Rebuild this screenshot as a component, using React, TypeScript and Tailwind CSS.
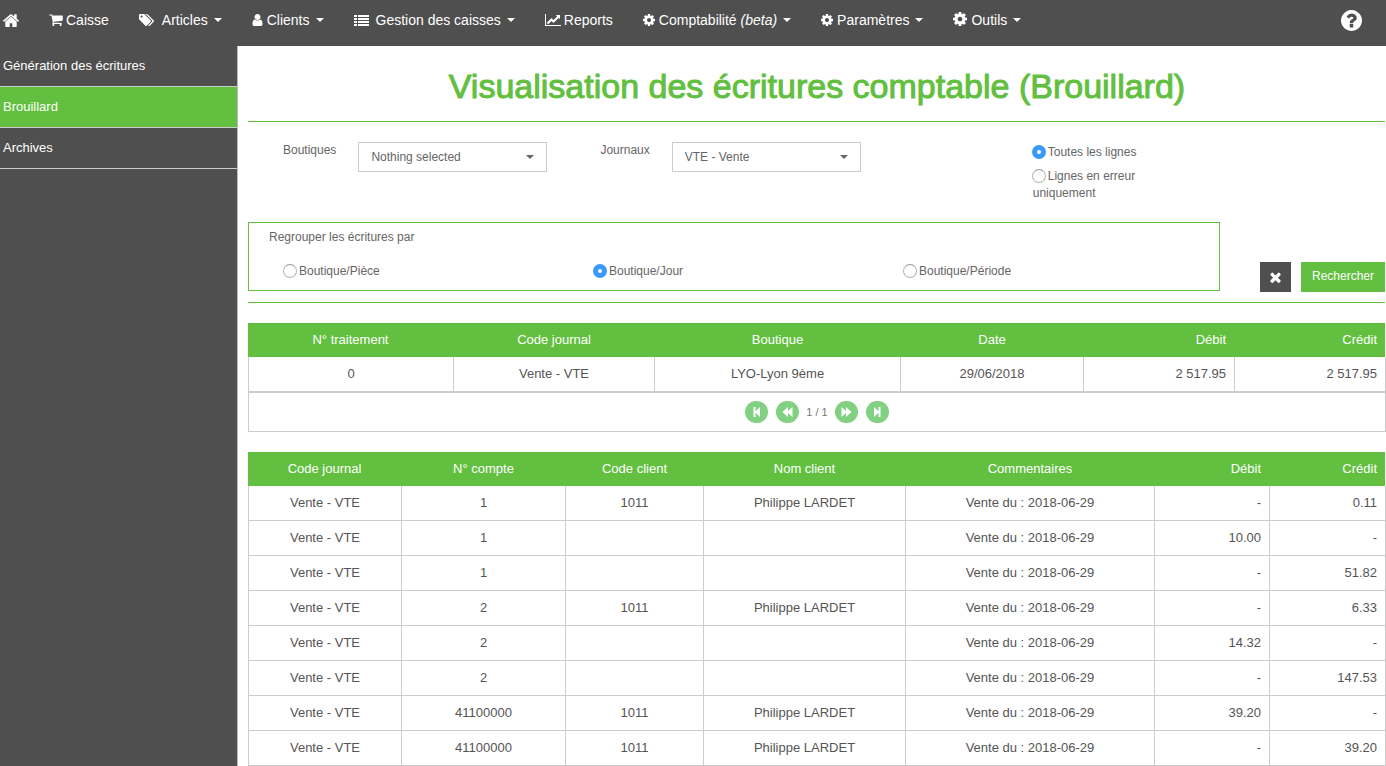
import React from "react";

const FA = {
  home: "M1472 992v480q0 26-19 45t-45 19h-384v-384h-256v384h-384q-26 0-45-19t-19-45v-480q0-1 .5-3t.5-3l575-474 575 474q1 2 1 6zm223-69l-62 74q-8 9-21 11h-3q-13 0-21-7l-692-577-692 577q-12 8-24 7-13-2-21-11l-62-74q-8-10-7-23.5t11-21.5l719-599q32-26 76-26t76 26l244 204v-195q0-14 9-23t23-9h192q14 0 23 9t9 23v408l219 182q10 8 11 21.5t-7 23.5z",
  cart: "M704 1536q0 52-38 90t-90 38-90-38-38-90 38-90 90-38 90 38 38 90zm896 0q0 52-38 90t-90 38-90-38-38-90 38-90 90-38 90 38 38 90zm128-1088v512q0 24-16.5 42.5t-40.5 21.5l-1044 122q13 60 13 70 0 16-24 64h920q26 0 45 19t19 45-19 45-45 19h-1024q-26 0-45-19t-19-45q0-11 8-31.5t16-36 21.5-40 15.5-29.5l-177-823h-204q-26 0-45-19t-19-45 19-45 45-19h256q16 0 28.5 6.5t19.5 15.5 13 24.5 8 26 5.5 29.5 4.5 26h1201q26 0 45 19t19 45z",
  tags: "M448 448q0-53-37.5-90.5t-90.5-37.5-90.5 37.5-37.5 90.5 37.5 90.5 90.5 37.5 90.5-37.5 37.5-90.5zm1067 576q0 53-37 90l-491 492q-39 37-91 37-53 0-90-37l-715-716q-38-37-64.5-101t-26.5-117v-416q0-52 38-90t90-38h416q53 0 117 26.5t102 64.5l715 714q37 39 37 91zm384 0q0 53-37 90l-491 492q-39 37-91 37-36 0-59-14t-53-45l470-470q37-37 37-90 0-52-37-91l-715-714q-38-38-102-64.5t-117-26.5h224q53 0 117 26.5t102 64.5l715 714q37 39 37 91z",
  user: "M1536 1399q0 109-62.5 187t-150.5 78h-854q-88 0-150.5-78t-62.5-187q0-85 8.5-160.5t31.5-152 58.5-131 94-89 134.5-34.5q131 128 313 128t313-128q76 0 134.5 34.5t94 89 58.5 131 31.5 152 8.5 160.5zm-256-887q0 159-112.5 271.5t-271.5 112.5-271.5-112.5-112.5-271.5 112.5-271.5 271.5-112.5 271.5 112.5 112.5 271.5z",
  list: "M0 0h3v2h-3zM0 3h3v2h-3zM0 6h3v2h-3zM0 9h3v2h-3zM4 0h11v2h-11zM4 3h11v2h-11zM4 6h11v2h-11zM4 9h11v2h-11z",
  chart: "M2048 1536v128h-2048v-1536h128v1408h1920zm-128-1248v435q0 21-19.5 29.5t-35.5-7.5l-121-121-633 633q-10 10-23 10t-23-10l-233-233-416 416-192-192 585-585q10-10 23-10t23 10l233 233 464-464-121-121q-16-16-7.5-35.5t29.5-19.5h435q14 0 23 9t9 23z",
  cog: "M1152 896q0-106-75-181t-181-75-181 75-75 181 75 181 181 75 181-75 75-181zm512-109v222q0 12-8 23t-20 13l-185 28q-19 54-39 91 35 50 107 138 10 12 10 25t-9 23q-27 37-99 108t-94 71q-12 0-26-9l-138-108q-44 23-91 38-16 136-29 186-7 28-36 28h-222q-14 0-24.5-8.5t-11.5-21.5l-28-184q-49-16-90-37l-141 107q-10 9-25 9-14 0-25-11-126-114-165-168-7-10-7-23 0-12 8-23 15-21 51-66.5t54-70.5q-27-50-41-99l-183-27q-13-2-21-12.5t-8-23.5v-222q0-12 8-23t19-13l186-28q14-46 39-92-40-57-107-138-10-12-10-24 0-10 9-23 26-36 98.5-107.5t94.5-71.5q13 0 26 10l138 107q44-23 91-38 16-136 29-186 7-28 36-28h222q14 0 24.5 8.5t11.5 21.5l28 184q49 16 90 37l142-107q9-9 24-9 13 0 25 10 129 119 165 170 7 8 7 22 0 12-8 23-15 21-51 66.5t-54 70.5q26 50 41 98l183 28q13 2 21 12.5t8 23.5z",
  help: "M1024 1376v-192q0-14-9-23t-23-9h-192q-14 0-23 9t-9 23v192q0 14 9 23t23 9h192q14 0 23-9t9-23zm256-672q0-88-55.5-163t-138.5-116-170-41q-243 0-371 213-15 24 8 42l132 100q7 6 19 6 16 0 25-12 53-68 86-92 34-24 86-24 48 0 85.5 26t37.5 59q0 38-20 61t-68 45q-63 28-115.5 86.5t-52.5 125.5v36q0 14 9 23t23 9h192q14 0 23-9t9-23q0-19 21.5-49.5t54.5-49.5q32-18 49-28.5t46-35 44.5-48 28-60.5 12.5-81zm384 192q0 209-103 385.5t-279.5 279.5-385.5 103-385.5-103-279.5-279.5-103-385.5 103-385.5 279.5-279.5 385.5-103 385.5 103 279.5 279.5 103 385.5z",
  times:
    "M1490 1322q0 40-28 68l-136 136q-28 28-68 28t-68-28l-294-294-294 294q-28 28-68 28t-68-28l-136-136q-28-28-28-68t28-68l294-294-294-294q-28-28-28-68t28-68l136-136q28-28 68-28t68 28l294 294 294-294q28-28 68-28t68 28l136 136q28 28 28 68t-28 68l-294 294 294 294q28 28 28 68z",
};

function Icon({ d, box, className }: { d: string; box: string; className: string }) {
  return (
    <svg viewBox={box} className={`shrink-0 fill-current ${className}`} aria-hidden="true">
      <path d={d} />
    </svg>
  );
}

function Caret({ className = "" }: { className?: string }) {
  return (
    <span
      className={`h-0 w-0 border-x-4 border-t-4 border-x-transparent ${className}`}
      aria-hidden="true"
    />
  );
}

type NavItem = {
  label: React.ReactNode;
  d: string;
  box: string;
  icon: string;
  gap: string;
  menu?: boolean;
};

const NAV: NavItem[] = [
  { label: "Caisse", d: FA.cart, box: "64 192 1664 1472", icon: "h-3 w-[14px]", gap: "gap-[3px]" },
  { label: "Articles", d: FA.tags, box: "0 128 1899 1515", icon: "h-3 w-[15px]", gap: "gap-2", menu: true },
  { label: "Clients", d: FA.user, box: "256 128 1280 1536", icon: "h-3 w-[11px]", gap: "gap-1", menu: true },
  { label: "Gestion des caisses", d: FA.list, box: "0 0 15 11", icon: "h-[11px] w-[15px]", gap: "gap-[7px]", menu: true },
  { label: "Reports", d: FA.chart, box: "0 128 2048 1536", icon: "h-3 w-4", gap: "gap-[3px]" },
  {
    label: (
      <>
        Comptabilité <i>(beta)</i>
      </>
    ),
    d: FA.cog,
    box: "128 128 1536 1536",
    icon: "h-3 w-3",
    gap: "gap-1",
    menu: true,
  },
  { label: "Paramètres", d: FA.cog, box: "128 128 1536 1536", icon: "h-3 w-3", gap: "gap-1", menu: true },
  { label: "Outils", d: FA.cog, box: "128 128 1536 1536", icon: "mb-[2px] h-[14px] w-[14px]", gap: "gap-1", menu: true },
];

function TopBar() {
  return (
    <header className="flex h-[46px] items-start justify-between bg-[#4f4f4f] pt-[10px] text-white">
      <nav className="flex gap-[30px] pl-[3px] text-sm leading-5">
        <a href="#accueil" aria-label="Accueil" className="flex h-5 items-center">
          <Icon d={FA.home} box="89 223 1614 1313" className="h-[13px] w-4" />
        </a>
        {NAV.map((item, i) => (
          <a key={i} href="#menu" className={`flex items-center whitespace-nowrap ${item.gap}`}>
            <Icon d={item.d} box={item.box} className={item.icon} />
            <span className="flex items-center gap-[6px]">
              <span>{item.label}</span>
              {item.menu && <Caret />}
            </span>
          </a>
        ))}
      </nav>
      <a href="#aide" aria-label="Aide" className="mr-6">
        <Icon d={FA.help} box="128 128 1536 1536" className="h-[21px] w-[21px]" />
      </a>
    </header>
  );
}

function SideBar() {
  const items = ["Génération des écritures", "Brouillard", "Archives"];
  return (
    <aside className="w-[238px] shrink-0 border-r border-[#bbbbbb] bg-[#4f4f4f]">
      <ul>
        {items.map((t) => (
          <li key={t} className="border-b border-[#cccccc]">
            <a
              href="#section"
              className={`flex h-10 items-center pl-[3px] text-[13px] text-white ${
                t === "Brouillard" ? "bg-[#62bf3f]" : ""
              }`}
            >
              {t}
            </a>
          </li>
        ))}
      </ul>
    </aside>
  );
}

function SelectField({ id, label, options }: { id: string; label: string; options: string[] }) {
  return (
    <div className="flex items-start gap-[22px]">
      <label htmlFor={id} className="leading-4">
        {label}
      </label>
      <div className="relative">
        <select
          id={id}
          className="h-[30px] w-[189px] appearance-none border border-[#cccccc] bg-white pr-8 pl-3 text-xs text-[#666666]"
        >
          {options.map((o) => (
            <option key={o}>{o}</option>
          ))}
        </select>
        <Caret className="pointer-events-none absolute top-[13px] right-[13px]" />
      </div>
    </div>
  );
}

function Radio({ name, label, checked }: { name: string; label: string; checked?: boolean }) {
  return (
    <label className="block leading-[17px]">
      <input
        type="radio"
        name={name}
        defaultChecked={checked}
        className="mr-[2px] -ml-px inline-block h-[14px] w-[14px] appearance-none rounded-full border border-[#b4b4b4] border-t-[#999999] bg-white align-[-3px] checked:border-[5px] checked:border-[#3b99fc]"
      />
      {label}
    </label>
  );
}

type Col = { title: string; width: string; right?: boolean };

function DataTable({ cols, rows }: { cols: Col[]; rows: string[][] }) {
  return (
    <table className="w-full table-fixed border-separate border-spacing-0 text-[13px]">
      <colgroup>
        {cols.map((c, i) => (
          <col key={i} className={c.width} />
        ))}
      </colgroup>
      <thead>
        <tr className="h-[34px] text-white">
          {cols.map((c, i) => (
            <th
              key={i}
              className={`border-r border-[#62bf3f] bg-[#62bf3f] px-2 font-normal last:border-white ${
                c.right ? "text-right" : "text-center"
              }`}
            >
              {c.title}
            </th>
          ))}
        </tr>
      </thead>
      <tbody>
        {rows.map((r, i) => (
          <tr key={i} className="h-[35px]">
            {r.map((v, j) => (
              <td
                key={j}
                className={`border-r border-b border-[#cccccc] px-2 first:border-l ${
                  cols[j].right ? "text-right" : "text-center"
                }`}
              >
                {v}
              </td>
            ))}
          </tr>
        ))}
      </tbody>
    </table>
  );
}

const SUMMARY_COLS: Col[] = [
  { title: "N° traitement", width: "w-[206px]" },
  { title: "Code journal", width: "w-[201px]" },
  { title: "Boutique", width: "w-[246px]" },
  { title: "Date", width: "w-[183px]" },
  { title: "Débit", width: "w-[151px]", right: true },
  { title: "Crédit", width: "w-[151px]", right: true },
];

const DETAIL_COLS: Col[] = [
  { title: "Code journal", width: "w-[154px]" },
  { title: "N° compte", width: "w-[164px]" },
  { title: "Code client", width: "w-[138px]" },
  { title: "Nom client", width: "w-[202px]" },
  { title: "Commentaires", width: "w-[249px]" },
  { title: "Débit", width: "w-[115px]", right: true },
  { title: "Crédit", width: "w-[116px]", right: true },
];

const J = "Vente - VTE";
const C = "Vente du : 2018-06-29";
const P = "Philippe LARDET";

const DETAIL_ROWS = [
  [J, "1", "1011", P, C, "-", "0.11"],
  [J, "1", "", "", C, "10.00", "-"],
  [J, "1", "", "", C, "-", "51.82"],
  [J, "2", "1011", P, C, "-", "6.33"],
  [J, "2", "", "", C, "14.32", "-"],
  [J, "2", "", "", C, "-", "147.53"],
  [J, "41100000", "1011", P, C, "39.20", "-"],
  [J, "41100000", "1011", P, C, "-", "39.20"],
];

function PageButton({ label, d }: { label: string; d: string }) {
  return (
    <button
      type="button"
      aria-label={label}
      className="flex h-[22px] w-[23px] items-center justify-center rounded-full bg-[#82d182] text-white"
    >
      <svg viewBox="0 0 12 12" className="h-3 w-3 fill-current" aria-hidden="true">
        <path d={d} />
      </svg>
    </button>
  );
}

function Pager() {
  return (
    <div className="flex h-10 items-center justify-center gap-[7px] border border-[#cccccc] text-[11px] text-[#777777]">
      <div className="flex gap-2">
        <PageButton label="Première page" d="M2.500 1h2v4.200L9 1v10L4.500 6.800V11h-2z" />
        <PageButton label="Page précédente" d="M.5 6L6 1v4L10.500 1v10L6 7v4z" />
      </div>
      <span>1 / 1</span>
      <div className="flex gap-2">
        <PageButton label="Page suivante" d="M11.500 6L6 1v4L1.500 1v10L6 7v4z" />
        <PageButton label="Dernière page" d="M9.500 1h-2v4.200L3 1v10l4.500-4.200V11h2z" />
      </div>
    </div>
  );
}

export default function App() {
  return (
    <div className="flex min-h-screen flex-col bg-white font-['Liberation_Sans',Arial,sans-serif] text-[#555555]">
      <TopBar />
      <div className="flex flex-1">
        <SideBar />
        <main className="min-w-0 flex-1 pl-[10px] text-xs text-[#666666]">
          <h1 className="flex h-[75px] items-center justify-center pt-[6px] text-[34px] font-normal text-[#62bf3f] [-webkit-text-stroke:1px_#62bf3f]">
            Visualisation des écritures comptable (Brouillard)
          </h1>
          <div className="mr-px border-y border-[#62bf3f]">
            <section className="flex h-[100px] items-start pt-5 pl-[35px]">
              <SelectField id="boutiques" label="Boutiques" options={["Nothing selected"]} />
              <div className="ml-[53px]">
                <SelectField id="journaux" label="Journaux" options={["VTE - Vente"]} />
              </div>
              <div className="ml-[172px] flex w-[130px] flex-col gap-[7px] pt-[2px]">
                <Radio name="lignes" label="Toutes les lignes" checked />
                <Radio name="lignes" label="Lignes en erreur uniquement" />
              </div>
            </section>
            <div className="flex items-start justify-between pb-[10px]">
              <fieldset className="h-[69px] w-[972px] border border-[#62bf3f] pt-[6px] pl-5">
                <p className="leading-4">Regrouper les écritures par</p>
                <div className="mt-[18px] grid grid-cols-[310px_310px_1fr] pl-[15px]">
                  <Radio name="groupe" label="Boutique/Pièce" />
                  <Radio name="groupe" label="Boutique/Jour" checked />
                  <Radio name="groupe" label="Boutique/Période" />
                </div>
              </fieldset>
              <div className="flex gap-[10px] pt-10">
                <button
                  type="button"
                  aria-label="Effacer"
                  className="flex h-[30px] w-[31px] items-center justify-center bg-[#4f4f4f] text-white"
                >
                  <Icon d={FA.times} box="302 302 1188 1252" className="h-[11px] w-[11px]" />
                </button>
                <button type="button" className="h-[30px] w-[84px] bg-[#62bf3f] pb-[2px] text-white">
                  Rechercher
                </button>
              </div>
            </div>
          </div>
          <div className="mt-5 text-[#555555]">
            <DataTable
              cols={SUMMARY_COLS}
              rows={[["0", "Vente - VTE", "LYO-Lyon 9ème", "29/06/2018", "2 517.95", "2 517.95"]]}
            />
            <Pager />
          </div>
          <div className="mt-5 text-[#555555]">
            <DataTable cols={DETAIL_COLS} rows={DETAIL_ROWS} />
          </div>
        </main>
      </div>
    </div>
  );
}
